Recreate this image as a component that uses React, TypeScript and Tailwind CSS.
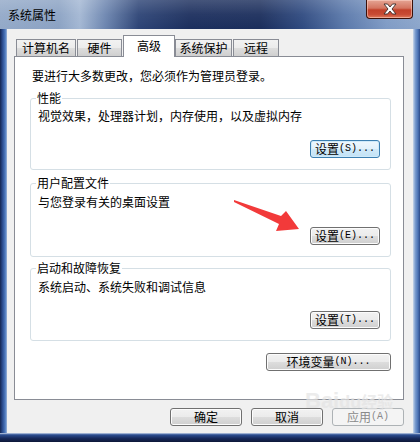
import React from "react";

const font = { fontFamily: "'Noto Sans CJK SC', 'Noto Sans', sans-serif" };
const mono = { fontFamily: "'Liberation Mono', 'DejaVu Sans Mono', monospace" };

function Label({ cjk, latin }: { cjk: string; latin?: string }) {
  return (
    <span className="flex items-center">
      <span>{cjk}</span>
      {latin ? (
        <span className="text-[10px] leading-[14px]" style={mono}>
          {latin}
        </span>
      ) : null}
    </span>
  );
}

function Btn({ cjk, latin, w, focus, disabled }: { cjk: string; latin?: string; w: string; focus?: boolean; disabled?: boolean }) {
  const base = "h-[18px] rounded-[3px] border flex items-center justify-center text-[12px] leading-[14px] ";
  const cls = disabled
    ? "border-[#adb2b5] bg-[#f4f4f4] text-[#8a8a8a]"
    : focus
    ? "border-[#3c7fb1] bg-[linear-gradient(180deg,#eef7fd_0%,#e1f1fb_50%,#d0e9f8_51%,#c2e2f6_100%)] text-black shadow-[inset_0_0_0_1px_#cfeafa]"
    : "border-[#707070] bg-[linear-gradient(180deg,#f2f2f2_0%,#ebebeb_50%,#dddddd_51%,#cfcfcf_100%)] text-black shadow-[inset_0_0_0_1px_#fcfcfc]";
  return (
    <div className={base + cls + " " + w}>
      <Label cjk={cjk} latin={latin} />
    </div>
  );
}

function Tab({ label, w, selected }: { label: string; w: string; selected?: boolean }) {
  if (selected) {
    return (
      <div
        className={
          "relative z-10 -mb-px h-[22px] border border-b-0 border-[#898c95] bg-white flex items-start justify-center pt-[3px] text-[12px] leading-[14px] " +
          w
        }
      >
        {label}
      </div>
    );
  }
  return (
    <div
      className={
        "h-[17px] border border-b-0 border-[#898c95] bg-[linear-gradient(180deg,#f2f2f2_0%,#ebebeb_50%,#dddddd_51%,#cfcfcf_100%)] flex items-center justify-center text-[12px] leading-[14px] " +
        w
      }
    >
      {label}
    </div>
  );
}

function Group({
  title,
  text,
  latin,
  h,
  mt,
  pt,
  bmt,
  focus,
}: {
  title: string;
  text: string;
  latin: string;
  h: string;
  mt: string;
  pt: string;
  bmt: string;
  focus?: boolean;
}) {
  return (
    <div className={"relative ml-[15px] w-[361px] rounded-[3px] border border-[#d5dfe5] flex flex-col pl-[7px] pr-[10px] " + h + " " + mt + " " + pt}>
      <div className="absolute -top-[8px] left-[5px] bg-white px-[1px] text-[12px] leading-[14px]">{title}</div>
      <div className="text-[12px] leading-[14px]">{text}</div>
      <div className={"flex justify-end " + bmt}>
        <Btn cjk="设置" latin={latin} w="w-[70px]" focus={focus} />
      </div>
    </div>
  );
}

export default function App() {
  return (
    <div className="relative w-[420px] h-[442px] flex flex-col overflow-hidden bg-[#2a4680] text-black" style={font}>
      {/* title bar */}
      <div className="relative h-[29px] bg-[linear-gradient(90deg,#93a9c8_0%,#8ba2c3_14%,#a3b7d3_19%,#6d86b0_25%,#2d4476_33%,#1c2f5e_45%,#1b2e5c_62%,#2f4a80_72%,#5a78aa_82%,#7f9bc5_92%,#8ca6cb_100%)]">
        <div className="absolute inset-0 bg-[linear-gradient(180deg,rgba(255,255,255,0.18)_0%,rgba(255,255,255,0.05)_50%,rgba(0,0,0,0)_100%)]" />
        <div className="relative pl-[8px] pt-[8px] text-[12px] leading-[14px] text-black">系统属性</div>
        <div className="absolute right-[7px] top-0 w-[47px] h-[19px] rounded-b-[4px] border border-t-0 border-[#3b1008] bg-[linear-gradient(180deg,#e5a594_0%,#d47560_45%,#c2412a_55%,#c84b34_80%,#e07a5a_100%)] shadow-[inset_0_0_0_1px_rgba(255,220,210,0.5)] flex items-center justify-center">
          <svg width="14" height="12" viewBox="0 0 14 12">
            <path
              d="M1 1 L4.5 1 L7 4 L9.5 1 L13 1 L9 6 L13 11 L9.5 11 L7 8 L4.5 11 L1 11 L5 6 Z"
              fill="#ffffff"
              stroke="#3a2a28"
              strokeWidth="0.9"
              strokeLinejoin="round"
            />
          </svg>
        </div>
      </div>

      {/* middle */}
      <div className="flex h-[404px]">
        <div className="w-[7px] bg-[linear-gradient(90deg,#142551_0%,#2b4c8e_35%,#4f7bc0_75%,#9cb4d8_100%)]" />
        <div className="flex-1 bg-[#f0f0f0] flex flex-col">
          {/* tabs */}
          <div className="mt-[6px] h-[21px] flex items-end pl-[9px]">
            <Tab label="计算机名" w="w-[60px]" />
            <div className="w-[1px]" />
            <Tab label="硬件" w="w-[45px]" />
            <div className="w-[1px]" />
            <Tab label="高级" w="w-[52px]" selected />
            <Tab label="系统保护" w="w-[57px]" />
            <div className="w-[1px]" />
            <Tab label="远程" w="w-[46px]" />
          </div>
          {/* panel */}
          <div className="ml-[7px] w-[390px] h-[344px] border border-[#898c95] bg-white flex flex-col">
            <div className="pt-[12px] pl-[17px] text-[12px] leading-[14px]">要进行大多数更改，您必须作为管理员登录。</div>
            <Group title="性能" text="视觉效果，处理器计划，内存使用，以及虚拟内存" latin="(S)..." h="h-[72px]" mt="mt-[15px]" pt="pt-[10px]" bmt="mt-[17px]" focus />
            <Group title="用户配置文件" text="与您登录有关的桌面设置" latin="(E)..." h="h-[74px]" mt="mt-[13px]" pt="pt-[11px]" bmt="mt-[18px]" />
            <Group title="启动和故障恢复" text="系统启动、系统失败和调试信息" latin="(T)..." h="h-[73px]" mt="mt-[11px]" pt="pt-[11px]" bmt="mt-[17px]" />
            <div className="mt-[12px] flex justify-end pr-[12px]">
              <Btn cjk="环境变量" latin="(N)..." w="w-[125px]" />
            </div>
          </div>
          {/* bottom buttons */}
          <div className="mt-[8px] flex justify-end gap-[9px] pr-[9px]">
            <Btn cjk="确定" w="w-[72px]" />
            <Btn cjk="取消" w="w-[72px]" />
            <Btn cjk="应用" latin="(A)" w="w-[72px]" disabled />
          </div>
        </div>
        <div className="w-[7px] bg-[linear-gradient(90deg,#c9d7ea_0%,#7e9fd0_30%,#4c74b6_70%,#2c4a88_100%)]" />
      </div>
      {/* bottom frame */}
      <div className="h-[9px] bg-[linear-gradient(180deg,#c9d6ea_0%,#2c4e92_20%,#17295a_60%,#0d1737_100%)]" />

      {/* watermark */}
      <div className="absolute left-[305px] top-[390px] text-[22px] leading-[22px] font-bold text-[#e4e4e4] opacity-70 pointer-events-none" style={{ fontFamily: "'Liberation Sans', sans-serif" }}>
        Bai<span className="text-[18px]">du</span><span className="text-[16px]" style={font}>经验</span>
      </div>

      {/* red arrow */}
      <svg className="absolute left-0 top-0 pointer-events-none" width="420" height="442" viewBox="0 0 420 442">
        <polygon points="234,200 281,216 286,211 299,229 276,231 279,224 234,202" fill="#f23a3a" />
      </svg>
    </div>
  );
}
